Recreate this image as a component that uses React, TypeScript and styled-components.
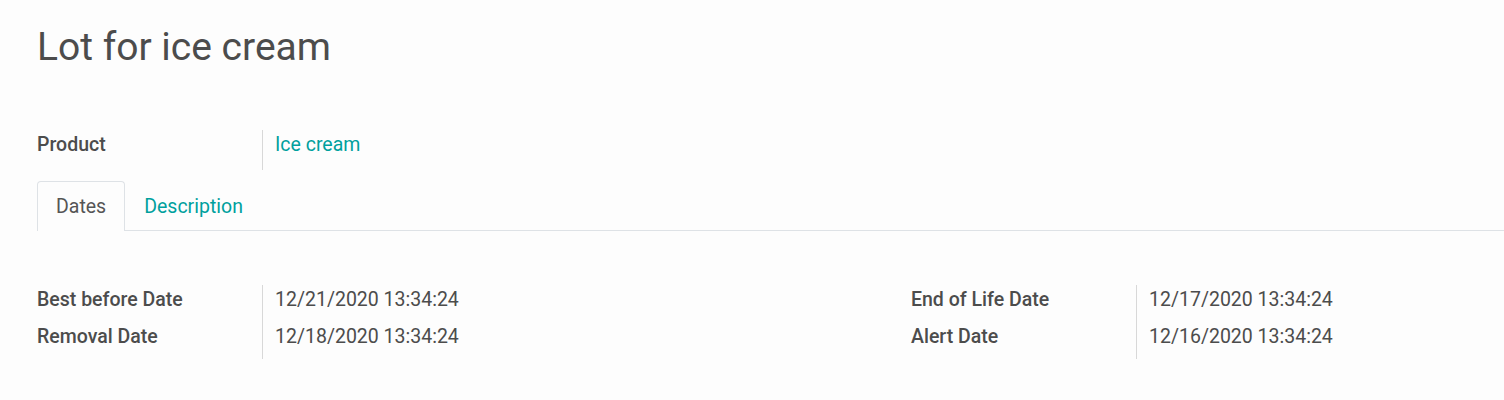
import { Fragment } from 'react';
import styled, { createGlobalStyle } from 'styled-components';

const GlobalStyle = createGlobalStyle`
  body {
    margin: 0;
    background: #fdfdfd;
    font-family: Roboto, "Noto Sans", sans-serif;
    color: #4c4c4c;
  }
`;

const Sheet = styled.div`
  padding: 20px 0 0 37px;
  overflow: hidden;
`;

const Title = styled.h1`
  margin: 0 0 56px 0;
  font-size: 39px;
  font-weight: 400;
  line-height: 54px;
  color: #4c4c4c;
`;

const FieldRow = styled.div`
  display: flex;
  height: 40px;
`;

const Label = styled.div`
  width: 225px;
  padding-top: 1px;
  font-size: 19.5px;
  font-weight: 500;
  line-height: 28px;
`;

const Value = styled.div<{ $link?: boolean }>`
  border-left: 1px solid #d8d8d8;
  padding: 1px 0 0 12px;
  font-size: 19.5px;
  line-height: 28px;
  color: ${(p) => (p.$link ? '#00a09d' : '#4c4c4c')};
`;

const TabBar = styled.div`
  display: flex;
  margin-top: 11px;
  border-bottom: 1px solid #dee2e6;
  height: 49px;
`;

const Tab = styled.div<{ $active?: boolean }>`
  display: flex;
  align-items: center;
  padding: 0 18px;
  font-size: 19.5px;
  border: 1px solid ${(p) => (p.$active ? '#dee2e6' : 'transparent')};
  border-bottom: 0;
  border-radius: 4px 4px 0 0;
  background: ${(p) => (p.$active ? '#fdfdfd' : 'transparent')};
  color: ${(p) => (p.$active ? '#555555' : '#00a09d')};
  margin-bottom: -1px;
`;

const Groups = styled.div`
  display: flex;
  padding-top: 54px;
`;

const Group = styled.div`
  width: 874px;
  flex-shrink: 0;
  display: grid;
  grid-template-columns: 225px 1fr;
`;

const GroupLabel = styled.div`
  font-size: 19.5px;
  font-weight: 500;
  line-height: 28px;
  padding: 1px 0 8px;
`;

const GroupValue = styled.div`
  border-left: 1px solid #d8d8d8;
  padding: 1px 0 8px 12px;
  font-size: 19.5px;
  line-height: 28px;
`;

const leftDates = [
  ['Best before Date', '12/21/2020 13:34:24'],
  ['Removal Date', '12/18/2020 13:34:24'],
];

const rightDates = [
  ['End of Life Date', '12/17/2020 13:34:24'],
  ['Alert Date', '12/16/2020 13:34:24'],
];

const DateGroup = ({ rows }: { rows: string[][] }) => (
  <Group>
    {rows.map(([label, value]) => (
      <Fragment key={label}>
        <GroupLabel>{label}</GroupLabel>
        <GroupValue>{value}</GroupValue>
      </Fragment>
    ))}
  </Group>
);

export default function App() {
  return (
    <>
      <GlobalStyle />
      <Sheet>
        <Title>Lot for ice cream</Title>
        <FieldRow>
          <Label>Product</Label>
          <Value $link>Ice cream</Value>
        </FieldRow>
        <TabBar>
          <Tab $active>Dates</Tab>
          <Tab>Description</Tab>
        </TabBar>
        <Groups>
          <DateGroup rows={leftDates} />
          <DateGroup rows={rightDates} />
        </Groups>
      </Sheet>
    </>
  );
}
